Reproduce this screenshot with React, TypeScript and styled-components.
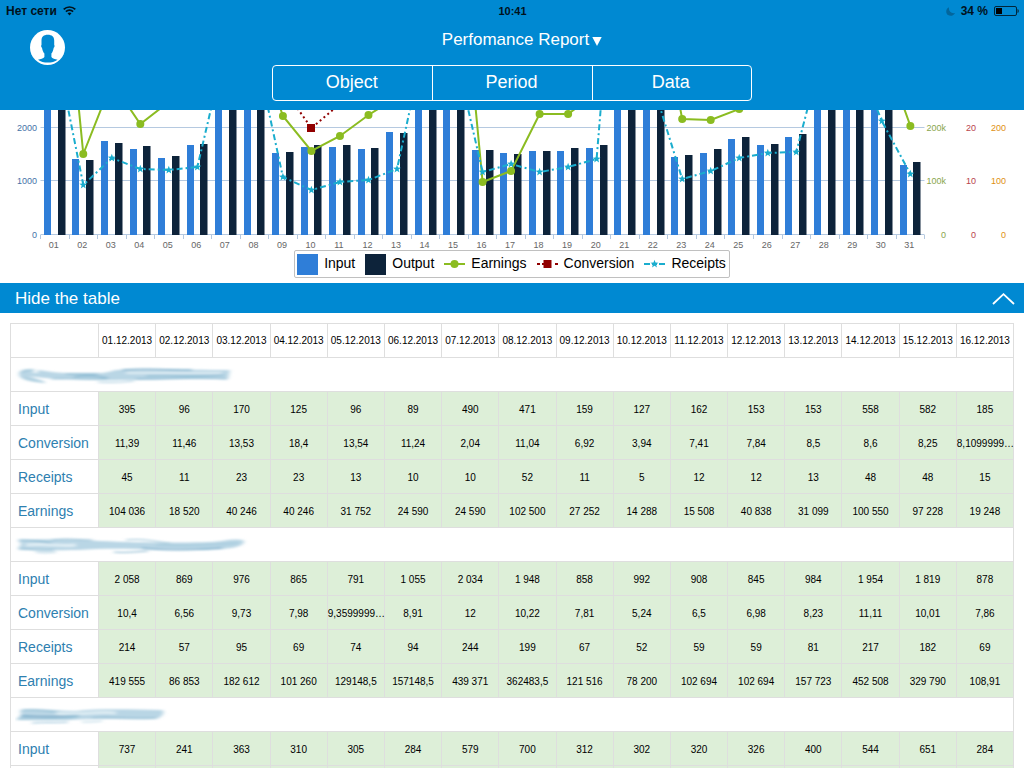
import React from "react";
import styled, { createGlobalStyle } from "styled-components";

const blue = "#0089d2";
const inputColor = "#2f7ed8";
const outputColor = "#0d233a";
const earningsColor = "#8bbc21";
const conversionColor = "#910000";
const receiptsColor = "#1aadce";

const GlobalStyle = createGlobalStyle`
  * { box-sizing: border-box; }
  body {
    margin: 0;
    background: #fff;
    font-family: "Liberation Sans", Arial, sans-serif;
  }
`;

const Page = styled.div`
  height: 100vh;
  overflow: hidden;
  display: flex;
  flex-direction: column;
`;

const Header = styled.header`
  flex: none;
  height: 110px;
  background: ${blue};
  color: #fff;
  display: flex;
  flex-direction: column;
`;

const StatusBar = styled.div`
  height: 22px;
  padding: 0 5px 0 6px;
  display: grid;
  grid-template-columns: 1fr auto 1fr;
  align-items: center;
  font-size: 11px;
  line-height: 22px;
  font-weight: bold;
  color: #00121c;
`;

const StatusGroup = styled.div<{ $end?: boolean }>`
  display: flex;
  align-items: center;
  gap: 6px;
  font-size: 12px;
  justify-content: ${(p) => (p.$end ? "flex-end" : "flex-start")};
`;

const NavBar = styled.div`
  flex: 1;
  display: grid;
  grid-template-columns: 1fr minmax(0, 480px) 1fr;
  padding: 0 30px;
`;

const ProfileButton = styled.button`
  width: 36px;
  height: 36px;
  margin-top: 7px;
  padding: 0;
  border: 0;
  background: none;
  display: block;
`;

const Center = styled.div`
  display: flex;
  flex-direction: column;
  align-items: center;
  gap: 8px;
  padding-top: 8px;
`;

const ReportButton = styled.button`
  display: flex;
  align-items: center;
  gap: 3px;
  height: 20px;
  padding: 0 0 0 20px;
  border: 0;
  background: none;
  color: #fff;
  font: 17px/20px "Liberation Sans", Arial, sans-serif;
  & > svg { margin-top: 2px; }
`;

const Segments = styled.div`
  align-self: stretch;
  display: grid;
  grid-template-columns: repeat(3, 1fr);
  height: 36px;
  margin-top: 7px;
  border: 1px solid #fff;
  border-radius: 4px;
`;

const Segment = styled.button`
  padding: 0 2px 2px 0;
  border: 0;
  background: none;
  color: #fff;
  font: 18px/20px "Liberation Sans", Arial, sans-serif;
  & + & { border-left: 1px solid #fff; }
`;

const ChartPanel = styled.section`
  flex: none;
  display: flex;
  flex-direction: column;
  align-items: center;
  padding-bottom: 5px;
`;

const ChartSvg = styled.svg`
  display: block;
  width: 100%;
  height: auto;
`;

const Legend = styled.ul`
  list-style: none;
  margin: 0;
  height: 28px;
  padding: 0 3px 0 2px;
  display: flex;
  align-items: center;
  gap: 10px;
  border: 1px solid #c0c0c0;
  border-radius: 2px;
  font-size: 14px;
  line-height: 20px;
`;

const LegendItem = styled.li`
  display: flex;
  align-items: center;
  gap: 6px;
  & > svg { display: block; }
`;

const LegendText = styled.span`
  padding-bottom: 2px;
`;

const ToggleBar = styled.button`
  flex: none;
  height: 30px;
  padding: 2px 9px 0 15px;
  border: 0;
  background: ${blue};
  color: #fff;
  display: flex;
  align-items: center;
  justify-content: space-between;
  font: 17px/20px "Liberation Sans", Arial, sans-serif;
`;

const TableWrap = styled.section`
  padding: 10px;
`;

const DataTable = styled.table`
  width: 100%;
  table-layout: fixed;
  border-collapse: collapse;
  font-size: 10px;
  line-height: 12px;
`;

const Col = styled.col`
  width: 88px;
`;

const Row = styled.tr`
  height: 34px;
`;

const DateHead = styled.th`
  padding: 0;
  border: 1px solid #dedede;
  font-weight: normal;
  text-align: center;
  white-space: nowrap;
`;

const GroupCell = styled.th`
  padding: 2px 0 0 4px;
  border: 1px solid #dedede;
  & > svg { display: block; }
`;

const LabelCell = styled.th`
  padding: 0 0 0 7px;
  border: 1px solid #dedede;
  color: #2e80b0;
  font-size: 14px;
  line-height: 16px;
  font-weight: normal;
  text-align: left;
`;

const ValueCell = styled.td`
  padding: 2px 0 0;
  border: 1px solid #dedede;
  background: #ddefd8;
  text-align: center;
  white-space: nowrap;
`;

/* Bar tops in chart units; a null bar runs past the visible top. */
const top = null;
const inputTops: (number | null)[] = [top, 49, 31, 39, 48, 35, top, top, 43, 37, 37, 39, 22, top, top, 40, 43, 41, 41, 38, top, top, 47, 43, 29, 35, 27, top, top, top, 55];
const outputTops: (number | null)[] = [top, 50, 33, 36, 46, 34, top, top, 42, 35, 35, 38, 23, top, top, 40, 44, 41, 38, 35, top, top, 45, 39, 27, 34, 24, top, top, top, 52];
const earnings = [-246, 44, -28, 14, -8, -50, -130, -80, 6, 41, 26, 5, -13, -160, -230, 72, 61, 4, 4, -17, -150, -141, 9, 10, -1, -15, -50, -150, -130, -64, 16];
const receipts = [-68, 75, 48, 59, 60, 57, -65, -65, 67, 80, 72, 70, 59, -72, -62, 62, 54, 62, 57, 49, -300, -23, 69, 61, 48, 43, 42, -68, -60, 11, 64];
const conversion: [number, number][] = [[8, -22], [9, 18], [10, -6]];

const plotLeft = 40.5;
const step = 28.52;
const baseline = 125;
const centerX = (i: number) => plotLeft + step * (i + 0.5);
const linePoints = (ys: number[]) => ys.map((y, i) => `${centerX(i).toFixed(1)},${y}`).join(" ");

const star = (x: number, y: number) =>
  Array.from({ length: 10 }, (_, k) => {
    const r = k % 2 ? 1.7 : 4.2;
    const a = -Math.PI / 2 + (k * Math.PI) / 5;
    return `${(x + r * Math.cos(a)).toFixed(1)},${(y + r * Math.sin(a)).toFixed(1)}`;
  }).join(" ");

const axes = [
  { x: 946, color: "#89a54e", labels: ["200k", "100k", "0"] },
  { x: 976, color: "#b8434c", labels: ["20", "10", "0"] },
  { x: 1006, color: "#e08f12", labels: ["200", "100", "0"] },
];
const gridY = [18, 71, 125];

function Chart() {
  return (
    <ChartSvg viewBox="0 0 1024 140" role="img" aria-label="Performance by day">
      {gridY.map((y) => (
        <line key={y} x1={plotLeft} x2="924.5" y1={y - 0.5} y2={y - 0.5} stroke="#b5c9e0" />
      ))}
      {Array.from({ length: 32 }, (_, i) => {
        const x = Math.floor(plotLeft + step * i) + 0.5;
        return <line key={i} x1={x} x2={x} y1="125" y2="129" stroke="#b5c9e0" />;
      })}
      {inputTops.map((t, i) => (
        <rect key={i} x={Math.round(centerX(i) - 10.8)} y={t ?? -5} width="7" height={baseline - (t ?? -5)} fill={inputColor} />
      ))}
      {outputTops.map((t, i) => (
        <rect key={i} x={Math.round(centerX(i) + 3)} y={t ?? -5} width="7.5" height={baseline - (t ?? -5)} fill={outputColor} />
      ))}
      <polyline points={linePoints(earnings)} fill="none" stroke={earningsColor} strokeWidth="2" />
      {earnings.map((y, i) => (
        <circle key={i} cx={centerX(i)} cy={y} r="4" fill={earningsColor} />
      ))}
      <polyline points={conversion.map(([i, y]) => `${centerX(i)},${y}`).join(" ")} fill="none" stroke={conversionColor} strokeWidth="2" strokeDasharray="2 3" />
      {conversion.map(([i, y]) => (
        <rect key={i} x={Math.round(centerX(i)) - 4} y={y - 4} width="8" height="8" fill={conversionColor} />
      ))}
      <polyline points={linePoints(receipts)} fill="none" stroke={receiptsColor} strokeWidth="2" strokeDasharray="6 3 2 3" />
      {receipts.map((y, i) => (
        <polygon key={i} points={star(centerX(i), y)} fill={receiptsColor} />
      ))}
      <g fontSize="9" fill="#4572a7" textAnchor="end">
        {["2000", "1000", "0"].map((t, i) => (
          <text key={t} x="37" y={gridY[i] + 3}>{t}</text>
        ))}
      </g>
      {axes.map((a) => (
        <g key={a.x} fontSize="9" fill={a.color} textAnchor="end">
          {a.labels.map((t, i) => (
            <text key={t} x={a.x} y={gridY[i] + 3}>{t}</text>
          ))}
        </g>
      ))}
      <g fontSize="9" fill="#666" textAnchor="middle">
        {inputTops.map((_, i) => (
          <text key={i} x={centerX(i) - 1} y="138">{String(i + 1).padStart(2, "0")}</text>
        ))}
      </g>
    </ChartSvg>
  );
}

function Swatch({ color }: { color: string }) {
  return (
    <svg width="21" height="21" viewBox="0 0 21 21" aria-hidden="true">
      <rect width="21" height="21" fill={color} />
    </svg>
  );
}

const dates = Array.from({ length: 16 }, (_, i) => `${String(i + 1).padStart(2, "0")}.12.2013`);

const groups = [
  {
    smudge: 0,
    rows: [
      ["Input", "395|96|170|125|96|89|490|471|159|127|162|153|153|558|582|185"],
      ["Conversion", "11,39|11,46|13,53|18,4|13,54|11,24|2,04|11,04|6,92|3,94|7,41|7,84|8,5|8,6|8,25|8,1099999…"],
      ["Receipts", "45|11|23|23|13|10|10|52|11|5|12|12|13|48|48|15"],
      ["Earnings", "104 036|18 520|40 246|40 246|31 752|24 590|24 590|102 500|27 252|14 288|15 508|40 838|31 099|100 550|97 228|19 248"],
    ],
  },
  {
    smudge: 1,
    rows: [
      ["Input", "2 058|869|976|865|791|1 055|2 034|1 948|858|992|908|845|984|1 954|1 819|878"],
      ["Conversion", "10,4|6,56|9,73|7,98|9,3599999…|8,91|12|10,22|7,81|5,24|6,5|6,98|8,23|11,11|10,01|7,86"],
      ["Receipts", "214|57|95|69|74|94|244|199|67|52|59|59|81|217|182|69"],
      ["Earnings", "419 555|86 853|182 612|101 260|129148,5|157148,5|439 371|362483,5|121 516|78 200|102 694|102 694|157 723|452 508|329 790|108,91"],
    ],
  },
  {
    smudge: 2,
    rows: [
      ["Input", "737|241|363|310|305|284|579|700|312|302|320|326|400|544|651|284"],
      ["", "|||||||||||||||"],
    ],
  },
];

/* Each smudge is a tapered body shape with brush streaks over it. */
type Streak = [path: string, color: string, width: number];
const smudges: { body: string; streaks: Streak[] }[] = [
  {
    body: "M3 12C3 8 9 6 19 8C16 10 13 12 14 14C20 17 26 18 30 21C16 20 3 18 3 12ZM21 8C28 8 36 11 50 11H82C92 11 94 9 100 8C130 7 180 8 214 8L212 17C180 16 140 18 104 18C90 19 70 17 50 17C36 18 26 15 22 11Z",
    streaks: [
      ["M5 11C9 8 13 8 18 8", "#8dbcd3", 1],
      ["M6 15C12 18 18 19 28 20", "#9cc5d9", 1],
      ["M14 12C26 14 34 15 44 14", "#b9d6e5", 4],
      ["M50 12H82", "#7fb3ce", 1],
      ["M58 15C70 13 80 14 92 16", "#6fa8c7", 1],
      ["M36 17C50 16 70 18 90 17", "#8fbdd4", 1],
      ["M106 8C130 6 150 8 176 8", "#5c9ec1", 1],
      ["M110 11H206", "#dfedf4", 2],
      ["M130 14C150 13 170 15 208 13", "#7fb4cf", 1],
      ["M120 17C150 17 180 15 211 17", "#79afcc", 1],
      ["M82 20C96 21 108 20 118 19", "#a6cbdd", 1],
    ],
  },
  {
    body: "M2 8C30 7 60 7 84 9C130 11 190 11 206 9C218 7 229 7 228 10C226 16 210 17 190 18C150 18 110 16 80 17C50 19 34 18 2 17L5 12Z",
    streaks: [
      ["M3 8C14 8 24 9 36 11", "#75aecb", 1],
      ["M36 8C50 6 64 8 76 8", "#8dbad2", 1],
      ["M3 17C14 17 26 19 38 18", "#75aecb", 1],
      ["M20 20C26 21 32 21 40 20", "#a5cade", 1],
      ["M10 13C30 11 44 15 60 13", "#e0eef5", 3],
      ["M110 8C128 6 140 10 154 11", "#9bc4d8", 1],
      ["M126 16C150 19 180 18 206 16", "#5f9fc3", 1],
      ["M140 13C160 14 190 14 222 11", "#9dc6da", 1],
      ["M98 20C106 21 118 20 132 19", "#7db0cb", 1],
    ],
  },
  {
    body: "M4 8C20 6 40 9 60 9C90 6 120 8 146 8C150 9 146 16 140 17C110 18 80 16 50 18L0 18L5 13Z",
    streaks: [
      ["M6 8C20 7 32 9 44 10", "#85b7d0", 1],
      ["M5 14C30 15 48 15 64 13", "#3d8ab5", 1],
      ["M2 17C20 17 48 18 62 15", "#8fbdd4", 1],
      ["M40 11C60 14 80 9 100 11", "#deedf4", 3],
      ["M16 21C30 20 38 21 52 20", "#8fbdd5", 1],
      ["M66 20C72 20 78 20 86 19", "#b3d2e2", 1],
      ["M76 16C90 14 110 17 140 16", "#8bb9d1", 1],
    ],
  },
];

function Smudge({ index }: { index: number }) {
  const { body, streaks } = smudges[index];
  return (
    <svg width="240" height="28" viewBox="0 0 240 28" aria-hidden="true">
      <filter id={`soft${index}`} filterUnits="userSpaceOnUse" x="-4" y="0" width="244" height="28">
        <feGaussianBlur stdDeviation="2 0.8" />
      </filter>
      <g fill="none" filter={`url(#soft${index})`} transform="translate(1 0)">
        <path d={body} fill="#b9d6e5" />
        {streaks.map(([d, color, width]) => (
          <path key={d} d={d} stroke={color} strokeWidth={width} />
        ))}
      </g>
    </svg>
  );
}

export default function App() {
  return (
    <Page>
      <GlobalStyle />
      <Header>
        <StatusBar>
          <StatusGroup>
            <span>Нет сети</span>
            <svg width="13" height="10" viewBox="0 0 13 10" aria-hidden="true">
              <g fill="none" stroke="#00121c" strokeWidth="1.7">
                <path d="M0.7 3.4C4 0.2 9 0.2 12.3 3.4" />
                <path d="M2.9 5.7C5 3.7 8 3.7 10.1 5.7" />
              </g>
              <path d="M4.5 7.2C5.7 6.2 7.3 6.2 8.5 7.2L6.5 9.4Z" fill="#00121c" />
            </svg>
          </StatusGroup>
          <span>10:41</span>
          <StatusGroup $end>
            <svg width="9" height="9" viewBox="0 0 9 9" aria-hidden="true">
              <path d="M3 0.2C-0.4 1.6 -0.6 6.2 2 8C4.4 9.6 7.8 8.8 8.9 6C5.2 6.8 2.4 4 3 0.2Z" fill="#03669c" />
            </svg>
            <span>34 %</span>
            <svg width="25" height="10" viewBox="0 0 25 10" aria-hidden="true">
              <rect x="0.5" y="0.5" width="22" height="9" rx="1.5" fill="none" stroke="#00263b" />
              <rect x="2" y="2" width="6" height="6" fill="#000" />
              <path d="M23.5 3C25.2 3.6 25.2 6.4 23.5 7Z" fill="#00263b" />
            </svg>
          </StatusGroup>
        </StatusBar>
        <NavBar>
          <ProfileButton aria-label="Profile">
            <svg width="36" height="36" viewBox="0 0 36 36" aria-hidden="true">
              <circle cx="17.5" cy="18.5" r="17.5" fill="#fff" />
              <path d="M17.8 5.8C13.6 5.8 11.5 7.9 11.5 11.5V15.9C10.8 16.3 11.2 18.3 12 18.7C12.4 21.3 13.2 23.1 14.4 24.5V27.9C13.5 29.5 10.5 29.9 8 30.7C13 34.5 22.5 34.5 27.6 30.7C25 29.9 22.2 29.5 21.4 27.9V24.5C22.6 23.1 23.3 21.3 23.7 18.7C24.5 18.3 24.9 16.3 24.2 15.9V11.5C24.2 7.9 22 5.8 17.8 5.8Z" fill={blue} />
            </svg>
          </ProfileButton>
          <Center>
            <ReportButton>
              Perfomance Report
              <svg width="10" height="10" viewBox="0 0 10 10" aria-hidden="true">
                <path d="M0.3 1H9.7L5 10Z" fill="#fff" />
              </svg>
            </ReportButton>
            <Segments>
              <Segment>Object</Segment>
              <Segment>Period</Segment>
              <Segment>Data</Segment>
            </Segments>
          </Center>
        </NavBar>
      </Header>
      <ChartPanel>
        <Chart />
        <Legend>
          <LegendItem>
            <Swatch color={inputColor} />
            <LegendText>Input</LegendText>
          </LegendItem>
          <LegendItem>
            <Swatch color={outputColor} />
            <LegendText>Output</LegendText>
          </LegendItem>
          <LegendItem>
            <svg width="21" height="10" viewBox="0 0 21 10" aria-hidden="true">
              <path d="M0 5H21" stroke={earningsColor} strokeWidth="2" />
              <circle cx="10.5" cy="5" r="4" fill={earningsColor} />
            </svg>
            <LegendText>Earnings</LegendText>
          </LegendItem>
          <LegendItem>
            <svg width="21" height="10" viewBox="0 0 21 10" aria-hidden="true">
              <path d="M0 5H3M5 5H16M18 5H21" stroke={conversionColor} strokeWidth="2" strokeDasharray="3 3" />
              <rect x="6.5" y="1" width="8" height="8" fill={conversionColor} />
            </svg>
            <LegendText>Conversion</LegendText>
          </LegendItem>
          <LegendItem>
            <svg width="21" height="10" viewBox="0 0 21 10" aria-hidden="true">
              <path d="M0 5H6M8 5H13M15 5H21" stroke={receiptsColor} strokeWidth="2" />
              <polygon points={star(10.5, 5)} fill={receiptsColor} />
            </svg>
            <LegendText>Receipts</LegendText>
          </LegendItem>
        </Legend>
      </ChartPanel>
      <ToggleBar aria-expanded="true">
        Hide the table
        <svg width="23" height="12" viewBox="0 0 23 12" aria-hidden="true">
          <path d="M1 11L11.5 1.2L22 11" fill="none" stroke="#fff" strokeWidth="1.8" />
        </svg>
      </ToggleBar>
      <TableWrap>
        <DataTable>
          <colgroup>
            <Col />
            <col span={16} />
          </colgroup>
          <thead>
            <Row>
              <DateHead />
              {dates.map((d) => (
                <DateHead key={d} scope="col">{d}</DateHead>
              ))}
            </Row>
          </thead>
          {groups.map((g) => (
            <tbody key={g.smudge}>
              <Row>
                <GroupCell colSpan={17}><Smudge index={g.smudge} /></GroupCell>
              </Row>
              {g.rows.map(([label, values]) => (
                <Row key={label}>
                  <LabelCell scope="row">{label}</LabelCell>
                  {values.split("|").map((v, i) => (
                    <ValueCell key={i}>{v}</ValueCell>
                  ))}
                </Row>
              ))}
            </tbody>
          ))}
        </DataTable>
      </TableWrap>
    </Page>
  );
}
